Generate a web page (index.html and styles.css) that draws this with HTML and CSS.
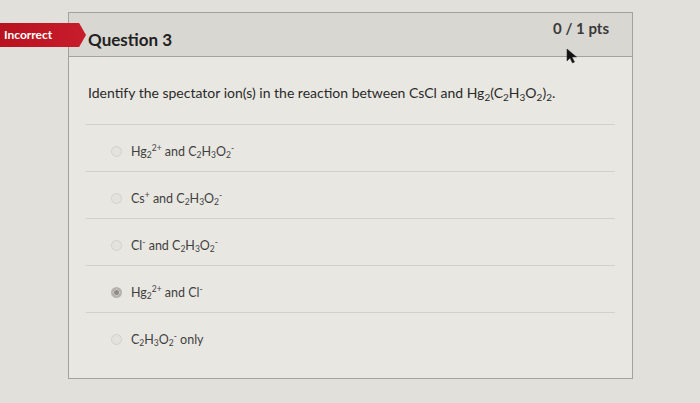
FILE: index.html
```html
<!DOCTYPE html>
<html lang="en">

<head>
    <meta charset="UTF-8">
    <meta name="viewport" content="width=device-width, initial-scale=1.0">
    <title>Question 3</title>
    <link rel="stylesheet" href="styles.css">
</head>

<body>
    <div class="quiz-page">
        <div class="answer-flag">Incorrect</div>

        <div class="question-card">
            <div class="question-header">
                <h2 class="question-title">Question 3</h2>
                <div class="question-points">0 / 1 pts</div>
            </div>

            <div class="question-body">
                <p class="question-text">
                    Identify the spectator ion(s) in the reaction between CsCl and
                    Hg<sub>2</sub>(C<sub>2</sub>H<sub>3</sub>O<sub>2</sub>)<sub>2</sub>.
                </p>

                <div class="answers">
                    <div class="answer">
                        <span class="radio"></span>
                        <span class="answer-text">Hg<sub>2</sub><sup>2+</sup> and C<sub>2</sub>H<sub>3</sub>O<sub>2</sub><sup>-</sup></span>
                    </div>
                    <div class="answer">
                        <span class="radio"></span>
                        <span class="answer-text">Cs<sup>+</sup> and C<sub>2</sub>H<sub>3</sub>O<sub>2</sub><sup>-</sup></span>
                    </div>
                    <div class="answer">
                        <span class="radio"></span>
                        <span class="answer-text">Cl<sup>-</sup> and C<sub>2</sub>H<sub>3</sub>O<sub>2</sub><sup>-</sup></span>
                    </div>
                    <div class="answer">
                        <span class="radio checked"></span>
                        <span class="answer-text">Hg<sub>2</sub><sup>2+</sup> and Cl<sup>-</sup></span>
                    </div>
                    <div class="answer">
                        <span class="radio"></span>
                        <span class="answer-text">C<sub>2</sub>H<sub>3</sub>O<sub>2</sub><sup>-</sup> only</span>
                    </div>
                </div>
            </div>
        </div>

        <!-- mouse pointer left on the screen -->
        <svg class="pointer" width="12" height="16" viewBox="0 0 12 16">
            <path d="M1 1 L1 13 L4 10 L6.5 15 L8.5 14 L6 9 L10.5 9 Z" fill="#111" stroke="#333" stroke-width="0.6" />
        </svg>
    </div>
</body>

</html>
```

FILE: styles.css
```css
body {
    margin: 0;
    background-color: #e2e0db;
    font-family: Lato, "Open Sans", sans-serif;
    color: #2d2d2d;
}

.quiz-page {
    position: relative;
    height: 403px;
    padding-top: 12px;
    box-sizing: border-box;
}

.answer-flag {
    position: absolute;
    left: 0;
    top: 23px;
    width: 74px;
    height: 24px;
    padding-left: 4px;
    padding-right: 8px;
    line-height: 24px;
    font-size: 12px;
    font-weight: 700;
    color: #fff;
    background: linear-gradient(to right, #b8121f, #c81c2c);
    clip-path: polygon(0 0, 92% 0, 100% 50%, 92% 100%, 0 100%);
}

.question-card {
    margin-left: 68px;
    width: 565px;
    height: 367px;
    box-sizing: border-box;
    border: 1px solid #a4a29e;
    background-color: #e9e7e2;
}

.question-header {
    display: flex;
    justify-content: space-between;
    align-items: center;
    height: 43px;
    padding: 0 23px 0 19px;
    background-color: #d9d7d2;
    border-bottom: 1px solid #a4a29e;
}

.question-title {
    margin: 0;
    padding-top: 10px;
    font-size: 17px;
    font-weight: 700;
    color: #222;
}

.question-points {
    margin-top: -14px;
    font-size: 15px;
    font-weight: 700;
    color: #3a3a3a;
}

.question-body {
    padding: 26px 17px 0 17px;
}

.question-text {
    margin: 0 0 17px 2px;
    font-size: 14px;
    line-height: 20px;
    color: #2a2a2a;
}

.question-text sub {
    font-size: 10px;
    vertical-align: -3px;
}

.answer {
    display: flex;
    align-items: center;
    gap: 9px;
    height: 47px;
    padding: 7px 0 0 25px;
    box-sizing: border-box;
    border-top: 1px solid #d2d0cb;
}

.radio {
    width: 11px;
    height: 11px;
    border-radius: 50%;
    border: 1px solid #d3d1cc;
    background-color: #e4e2dd;
    box-sizing: border-box;
}

.radio.checked {
    border: 2px solid #b5b3ae;
    background-color: #8e8c88;
    box-shadow: inset 0 0 0 1px #cfcdc8;
}

.answer-text {
    font-size: 12.5px;
    color: #3f3f3f;
}

.answer-text sub {
    font-size: 8.5px;
    vertical-align: -2px;
}

.answer-text sup {
    font-size: 8.5px;
    vertical-align: 5px;
}

.pointer {
    position: absolute;
    left: 566px;
    top: 48px;
}
```
